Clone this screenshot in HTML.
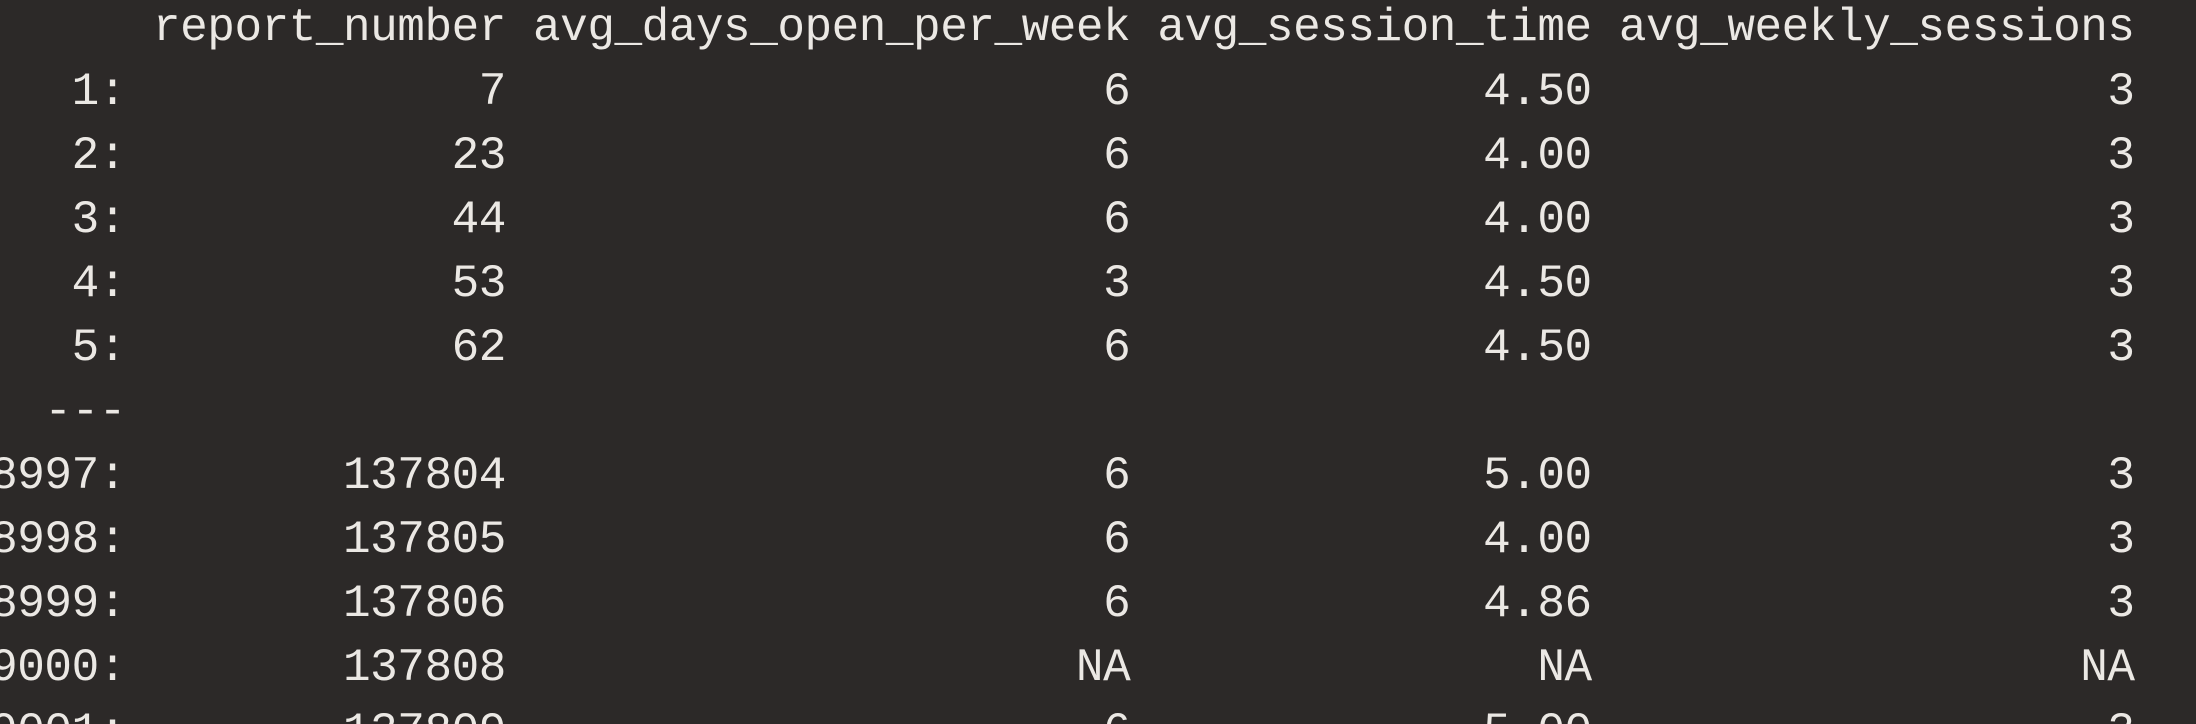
<!DOCTYPE html>
<html><head><style>
html,body{margin:0;padding:0;width:2196px;height:724px;overflow:hidden;background:#2c2928;}
#w{position:relative;width:2196px;height:724px;overflow:hidden;}
pre{position:absolute;left:-37px;top:-4px;margin:0;font-family:"Liberation Mono",monospace;font-size:46px;letter-spacing:-0.46px;line-height:64px;color:#ebe8e4;white-space:pre;}
</style></head><body><div id="w">
<pre>       report_number avg_days_open_per_week avg_session_time avg_weekly_sessions
    1:             7                      6             4.50                   3
    2:            23                      6             4.00                   3
    3:            44                      6             4.00                   3
    4:            53                      3             4.50                   3
    5:            62                      6             4.50                   3
   ---
38997:        137804                      6             5.00                   3
38998:        137805                      6             4.00                   3
38999:        137806                      6             4.86                   3
39000:        137808                     NA               NA                  NA
39001:        137809                      6             5.00                   3</pre>
</div></body></html>
